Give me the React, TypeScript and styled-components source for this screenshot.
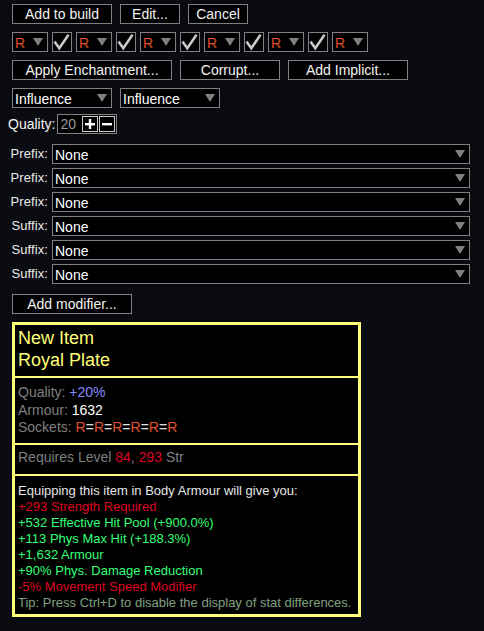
import React from "react";
import styled, { createGlobalStyle } from "styled-components";

const Global = createGlobalStyle`
  html, body { margin: 0; padding: 0; background: #0a0b10; }
  body { font-family: "Liberation Sans", Arial, sans-serif; font-size: 14px; color: #ffffff; }
`;

const Page = styled.div`
  width: 484px;
  height: 631px;
  box-sizing: border-box;
  padding-top: 4px;
  display: flex;
  flex-direction: column;
  background: #0a0b10;
  overflow: hidden;
`;

const Row = styled.div<{ $mt?: number; $gap?: number; $pl?: number }>`
  display: flex;
  align-items: center;
  height: 20px;
  margin-top: ${(p) => p.$mt ?? 0}px;
  gap: ${(p) => p.$gap ?? 8}px;
  padding-left: ${(p) => p.$pl ?? 12}px;
`;

const Button = styled.button<{ $w: number }>`
  width: ${(p) => p.$w}px;
  height: 20px;
  box-sizing: border-box;
  border: 1px solid #808080;
  background: #000;
  color: #f2f2f2;
  font: 14px/18px "Liberation Sans", Arial, sans-serif;
  padding: 0;
  text-align: center;
  flex: none;
`;

const Select = styled.div<{ $w?: number }>`
  width: ${(p) => (p.$w ? `${p.$w}px` : "auto")};
  flex: ${(p) => (p.$w ? "none" : "1")};
  height: 20px;
  box-sizing: border-box;
  border: 1px solid #808080;
  background: #000;
  display: flex;
  align-items: center;
  justify-content: space-between;
  padding: 1px 4px 0 2px;
  line-height: 16px;
`;

const SelectText = styled.span<{ $color?: string }>`
  color: ${(p) => p.$color ?? "#ffffff"};
`;

const Arrow = styled.span`
  width: 0;
  height: 0;
  margin-bottom: 2px;
  border-left: 5px solid transparent;
  border-right: 5px solid transparent;
  border-top: 8px solid #808080;
`;

const Check = styled.div`
  width: 20px;
  height: 20px;
  box-sizing: border-box;
  border: 1px solid #808080;
  background: #000;
  flex: none;
  display: flex;
`;

const QualityLabel = styled.span`
  color: #f2f2f2;
  line-height: 20px;
`;

const QtyBox = styled.div`
  width: 60px;
  height: 20px;
  box-sizing: border-box;
  border: 1px solid #808080;
  background: #000;
  display: flex;
  align-items: center;
  gap: 1px;
  padding: 0 1px 0 2px;
`;

const QtyValue = styled.span`
  flex: 1;
  color: #9a9a9a;
  line-height: 18px;
`;

const StepBtn = styled.div`
  width: 16px;
  height: 16px;
  box-sizing: border-box;
  border: 1px solid #c8c8c8;
  background: #000;
  display: flex;
`;

const AffixList = styled.div`
  display: flex;
  flex-direction: column;
  gap: 4px;
  margin-top: 10px;
  padding-right: 14px;
`;

const AffixRow = styled.div`
  display: grid;
  grid-template-columns: 48px 1fr;
  column-gap: 4px;
  height: 20px;
  align-items: center;
`;

const AffixLabel = styled.span`
  text-align: right;
  color: #ececec;
  font-size: 13px;
  letter-spacing: 0.1px;
  line-height: 20px;
`;

const Tooltip = styled.div`
  width: 349px;
  box-sizing: border-box;
  margin: 8px 0 0 12px;
  border: 3px solid #ffff77;
  background: #000;
`;

const Section = styled.div<{ $pt: number; $pb: number; $size?: number; $lh?: number }>`
  padding: ${(p) => p.$pt}px 3px ${(p) => p.$pb}px 3px;
  font-size: ${(p) => p.$size ?? 14}px;
  line-height: ${(p) => p.$lh ?? 17.5}px;
  color: #7f7f7f;
  & + & {
    border-top: 2px solid #ffff77;
  }
`;

const Line = styled.div<{ $color?: string }>`
  color: ${(p) => p.$color ?? "inherit"};
  white-space: nowrap;
`;

const C = styled.span<{ $c: string }>`
  color: ${(p) => p.$c};
`;

const RED = "#e05030";

const CheckMark = () => (
  <svg width="18" height="18" viewBox="0 0 18 18">
    <polyline
      points="1.5,8.5 6.3,15.3 15.5,1.8"
      fill="none"
      stroke="#c8c8c8"
      strokeWidth="2.6"
      strokeLinejoin="miter"
    />
  </svg>
);

const PlusIcon = () => (
  <svg width="14" height="14" viewBox="0 0 14 14">
    <rect x="2" y="6" width="10" height="2.4" fill="#ffffff" />
    <rect x="5.8" y="2" width="2.4" height="10" fill="#ffffff" />
  </svg>
);

const MinusIcon = () => (
  <svg width="14" height="14" viewBox="0 0 14 14">
    <rect x="2" y="6" width="10" height="2.4" fill="#ffffff" />
  </svg>
);

const SocketSelect = () => (
  <Select $w={36}>
    <SelectText $color={RED}>R</SelectText>
    <Arrow />
  </Select>
);

const CheckBox = () => (
  <Check>
    <CheckMark />
  </Check>
);

const affixes = ["Prefix:", "Prefix:", "Prefix:", "Suffix:", "Suffix:", "Suffix:"];

export default function App() {
  return (
    <>
      <Global />
      <Page>
        <Row>
          <Button $w={100}>Add to build</Button>
          <Button $w={60}>Edit...</Button>
          <Button $w={60}>Cancel</Button>
        </Row>
        <Row $mt={8} $gap={4}>
          <SocketSelect />
          <CheckBox />
          <SocketSelect />
          <CheckBox />
          <SocketSelect />
          <CheckBox />
          <SocketSelect />
          <CheckBox />
          <SocketSelect />
          <CheckBox />
          <SocketSelect />
        </Row>
        <Row $mt={8}>
          <Button $w={160}>Apply Enchantment...</Button>
          <Button $w={100}>Corrupt...</Button>
          <Button $w={120}>Add Implicit...</Button>
        </Row>
        <Row $mt={8}>
          <Select $w={100}>
            <SelectText>Influence</SelectText>
            <Arrow />
          </Select>
          <Select $w={100}>
            <SelectText>Influence</SelectText>
            <Arrow />
          </Select>
        </Row>
        <Row $mt={6} $pl={8} $gap={2}>
          <QualityLabel>Quality:</QualityLabel>
          <QtyBox>
            <QtyValue>20</QtyValue>
            <StepBtn>
              <PlusIcon />
            </StepBtn>
            <StepBtn>
              <MinusIcon />
            </StepBtn>
          </QtyBox>
        </Row>
        <AffixList>
          {affixes.map((a, i) => (
            <AffixRow key={i}>
              <AffixLabel>{a}</AffixLabel>
              <Select>
                <SelectText>None</SelectText>
                <Arrow />
              </Select>
            </AffixRow>
          ))}
        </AffixList>
        <Row $mt={10}>
          <Button $w={120}>Add modifier...</Button>
        </Row>
        <Tooltip>
          <Section $pt={2} $pb={5} $size={18} $lh={22}>
            <Line $color="#ffff77">New Item</Line>
            <Line $color="#ffff77">Royal Plate</Line>
          </Section>
          <Section $pt={6} $pb={6.5}>
            <Line>
              Quality: <C $c="#8888ff">+20%</C>
            </Line>
            <Line>
              Armour: <C $c="#ffffff">1632</C>
            </Line>
            <Line>
              Sockets: <C $c={RED}>R</C>
              <C $c="#e0e0e0">=</C>
              <C $c={RED}>R</C>
              <C $c="#e0e0e0">=</C>
              <C $c={RED}>R</C>
              <C $c="#e0e0e0">=</C>
              <C $c={RED}>R</C>
              <C $c="#e0e0e0">=</C>
              <C $c={RED}>R</C>
              <C $c="#e0e0e0">=</C>
              <C $c={RED}>R</C>
            </Line>
          </Section>
          <Section $pt={4} $pb={7.5}>
            <Line>
              Requires Level <C $c="#dd0022">84</C>, <C $c="#dd0022">293</C> Str
            </Line>
          </Section>
          <Section $pt={7} $pb={3} $size={13} $lh={16}>
            <Line $color="#e6e6e6">Equipping this item in Body Armour will give you:</Line>
            <Line $color="#dd0022">+293 Strength Required</Line>
            <Line $color="#33ff77">+532 Effective Hit Pool (+900.0%)</Line>
            <Line $color="#33ff77">+113 Phys Max Hit (+188.3%)</Line>
            <Line $color="#33ff77">+1,632 Armour</Line>
            <Line $color="#33ff77">+90% Phys. Damage Reduction</Line>
            <Line $color="#dd0022">-5% Movement Speed Modifier</Line>
            <Line $color="#80a080">Tip: Press Ctrl+D to disable the display of stat differences.</Line>
          </Section>
        </Tooltip>
      </Page>
    </>
  );
}
